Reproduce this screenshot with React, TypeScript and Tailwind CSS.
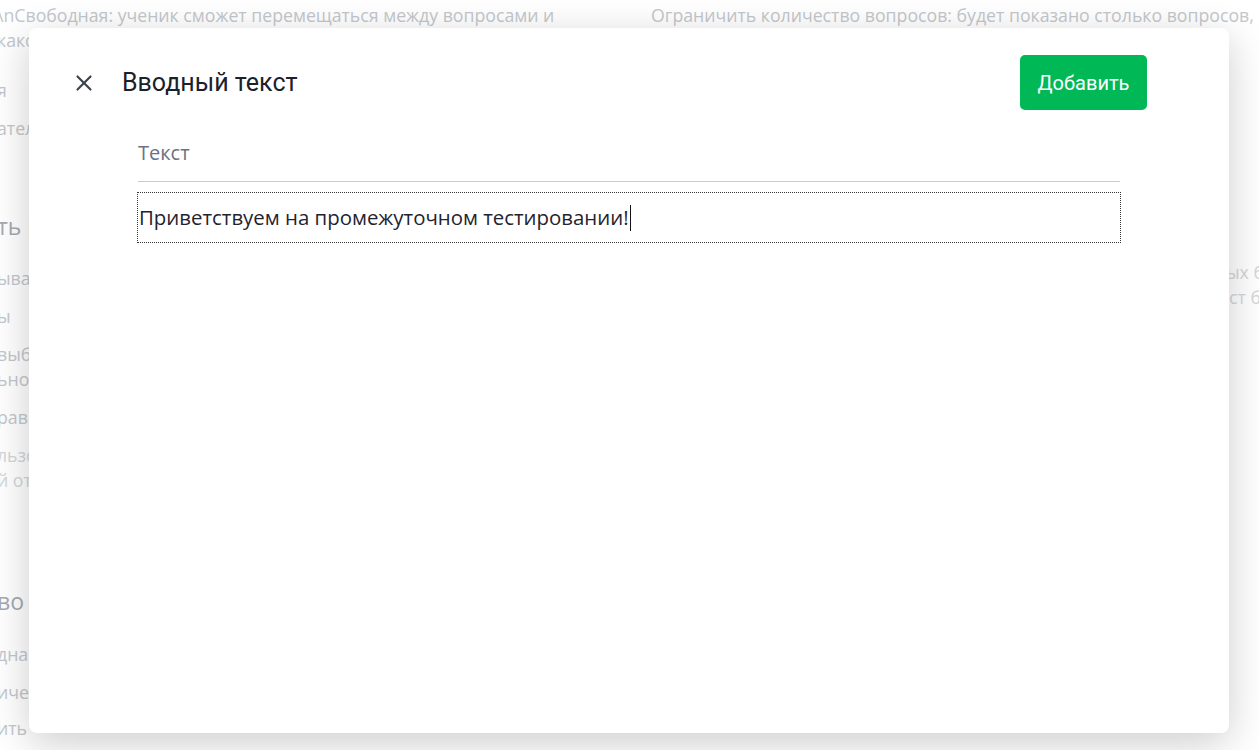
import { X } from 'lucide-react'

const openSans = { fontFamily: '"Open Sans", "Noto Sans", sans-serif' }

export default function App() {
  return (
    <div className="relative h-[750px] w-full overflow-hidden bg-white" style={openSans}>
      {/* Page behind the dialog */}
      <div className="flex text-[17.7px] leading-[25px] text-[#c3c7cc]">
        <div className="-ml-[3px] w-[640px] shrink-0 pt-[3px]">
          <p className="whitespace-nowrap">\nСвободная: ученик сможет перемещаться между вопросами и</p>
          <p className="whitespace-nowrap">каком угодно порядке</p>
          <p className="mt-[25px] whitespace-nowrap">я</p>
          <p className="mt-[13px] whitespace-nowrap">ателем вопросы</p>
          <h2 className="mt-[70px] whitespace-nowrap text-[23px] leading-[30px] text-[#a6aaaf]">ть результаты</h2>
          <p className="mt-[25px] whitespace-nowrap">ывать правильные ответы</p>
          <p className="mt-[13px] whitespace-nowrap">ы</p>
          <p className="mt-[13px] whitespace-nowrap"> выбранные ответы</p>
          <p className="whitespace-nowrap">ьно ответа</p>
          <p className="mt-[13px] whitespace-nowrap">равильные ответы</p>
          <p className="mt-[13px] whitespace-nowrap text-[#d4d6d9]">льзователь увидит</p>
          <p className="whitespace-nowrap text-[#d4d6d9]">й ответ</p>
          <h2 className="mt-[93px] whitespace-nowrap text-[23px] leading-[30px] text-[#a6aaaf]">во попыток</h2>
          <p className="mt-[26px] whitespace-nowrap">дна попытка</p>
          <p className="mt-[13px] whitespace-nowrap">ичество попыток</p>
          <p className="mt-[11px] whitespace-nowrap">ить</p>
        </div>
        <div className="ml-[14px] flex-1 pt-[3px]">
          <p className="whitespace-nowrap">Ограничить количество вопросов: будет показано столько вопросов,</p>
          <div className="mt-[232px] pl-[575px] text-[#d4d6d9]">
            <p className="whitespace-nowrap">ых б</p>
            <p className="whitespace-nowrap pl-[3px]">ст б</p>
          </div>
        </div>
      </div>

      {/* Dialog */}
      <div className="absolute left-[29px] top-[28px] flex h-[705px] w-[1200px] flex-col rounded-lg bg-white shadow-[0_10px_40px_rgba(0,0,0,0.2)]">
        <div className="flex items-center justify-between pl-[42px] pr-[82px] pt-[27px]">
          <div className="flex items-center gap-[25px]">
            <button className="flex h-[26px] w-[26px] items-center justify-center text-[#3d434b]">
              <X className="h-[28px] w-[28px]" strokeWidth={2} />
            </button>
            <h1 className="text-[25px] leading-[30px] text-[#1b202b]" style={{ fontFamily: 'Roboto, sans-serif' }}>
              Вводный текст
            </h1>
          </div>
          <button
            className="h-[55px] w-[127px] rounded-[5px] bg-[#00b956] text-[20px] text-white"
            style={{ fontFamily: 'Roboto, sans-serif' }}
          >
            Добавить
          </button>
        </div>

        <div className="mx-[109px] mt-[29px]">
          <label className="block text-[20px] leading-[28px] text-[#6b7280]">Текст</label>
          <div className="mt-[14px] h-px bg-[#c9cbce]" />
          <div className="-mx-px mt-[10px] flex h-[51px] items-center border border-dotted border-[#333]">
            <span className="pl-px text-[20.4px] text-[#1f2430]">Приветствуем на промежуточном тестировании!</span>
            <span className="ml-px h-[26px] w-px bg-[#111]" />
          </div>
        </div>
      </div>
    </div>
  )
}
